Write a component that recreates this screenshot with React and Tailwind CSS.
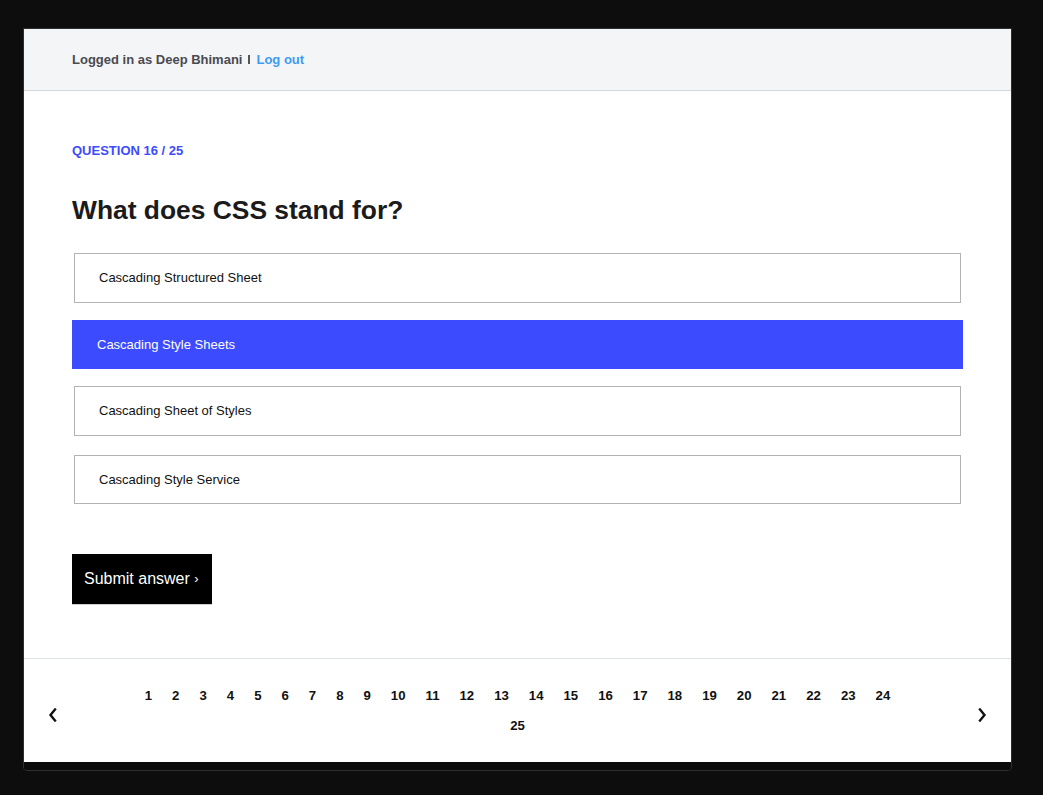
import React from "react";

const options = [
  "Cascading Structured Sheet",
  "Cascading Style Sheets",
  "Cascading Sheet of Styles",
  "Cascading Style Service",
];

const optMargins = ["mt-0 h-[50px]", "mt-[17px] h-[49px]", "mt-[17px] h-[50px]", "mt-[19px] h-[49px]"];

export default function App() {
  const nums = Array.from({ length: 25 }, (_, i) => i + 1);
  return (
    <div
      className="w-full h-[795px] bg-[#0d0d0d] pt-[28px] pl-[23px]"
      style={{ fontFamily: '"Liberation Sans", Arial, sans-serif' }}
    >
      <div className="w-[989px] border border-[#2f2f2f] rounded-b-[4px] bg-[#0b0b0b] overflow-hidden">
        <div className="h-[733px] bg-white flex flex-col">
          {/* header */}
          <div className="h-[62px] shrink-0 bg-[#f4f5f7] border-b border-[#d6d7d9] px-[48px] flex items-center">
            <span className="text-[13px] font-bold text-[#4a4a4f] leading-none">Logged in as Deep Bhimani</span>
            <span className="ml-[6px] w-[2px] h-[9px] bg-[#555] inline-block"></span>
            <span className="ml-[6px] text-[13px] font-bold text-[#3d9bf3] leading-none">Log out</span>
          </div>

          {/* main */}
          <div className="flex-1 px-[48px]">
            <div className="mt-[53px] text-[13px] font-bold text-[#3d4bff] leading-[14px] uppercase">
              Question 16 / 25
            </div>
            <h1 className="mt-[37px] text-[26.4px] font-bold text-[#1b1b1b] leading-[30px]">
              What does CSS stand for?
            </h1>
            <div className="mt-[28px] flex flex-col">
              {options.map((o, i) => {
                const selected = i === 1;
                return (
                  <div
                    key={o}
                    className={
                      optMargins[i] +
                      " flex items-center text-[13px] " +
                      (selected
                        ? "bg-[#3d4bff] text-white pl-[25px]"
                        : "mx-[2px] border border-[#b3b3b3] text-[#111] pl-[24px]")
                    }
                  >
                    {o}
                  </div>
                );
              })}
            </div>
            <button className="mt-[50px] h-[50px] w-[140px] bg-black text-white text-[16px] px-3 text-left shadow-[0_1px_0_#d0d0d0]">
              Submit answer <span className="text-[13px] relative -top-[1px]">›</span>
            </button>
          </div>

          {/* footer */}
          <div className="h-[104px] shrink-0 border-t border-[#dde3e6] pt-[21px] px-[24px] flex items-start justify-between">
            <div className="h-[60px] w-[40px] flex items-center pt-[10px]">
              <svg width="9" height="14" viewBox="0 0 9 14">
                <path d="M7 1.5 L2.5 7 L7 12.5" fill="none" stroke="#111" strokeWidth="2.4" strokeLinecap="square" />
              </svg>
            </div>
            <div className="w-[780px] flex flex-wrap justify-center pt-[1px]">
              {nums.map((n) => (
                <span key={n} className="px-[10px] text-[13.2px] font-bold leading-[30px] text-[#111]">
                  {n}
                </span>
              ))}
            </div>
            <div className="h-[60px] w-[40px] flex items-center justify-end pt-[10px]">
              <svg width="9" height="14" viewBox="0 0 9 14">
                <path d="M2 1.5 L6.5 7 L2 12.5" fill="none" stroke="#111" strokeWidth="2.4" strokeLinecap="square" />
              </svg>
            </div>
          </div>
        </div>
        <div className="h-[8px] bg-[#0b0b0b]"></div>
      </div>
    </div>
  );
}
